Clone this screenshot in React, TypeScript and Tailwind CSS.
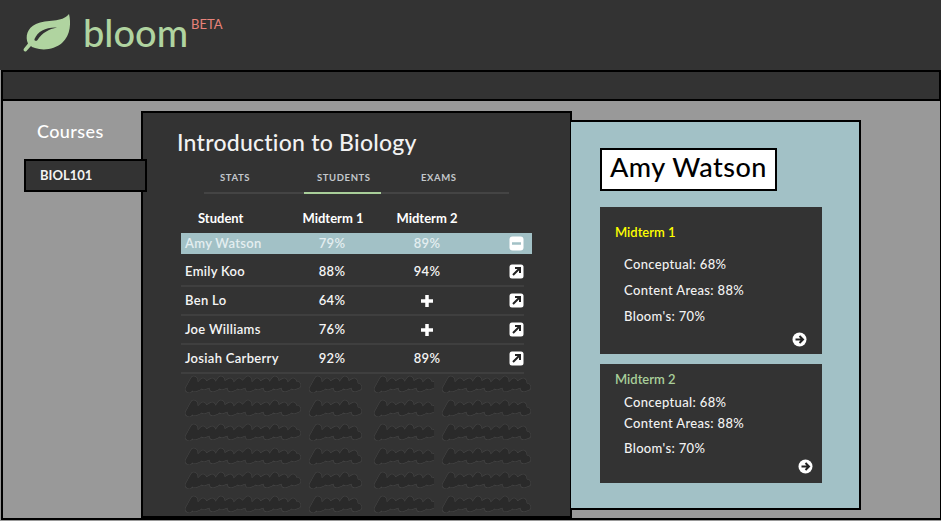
import { useMemo } from 'react';

const students = [
  { name: 'Amy Watson', m1: '79%', m2: '89%', active: true },
  { name: 'Emily Koo', m1: '88%', m2: '94%' },
  { name: 'Ben Lo', m1: '64%', m2: null },
  { name: 'Joe Williams', m1: '76%', m2: null },
  { name: 'Josiah Carberry', m1: '92%', m2: '89%' },
];

function Leaf() {
  return (
    <svg width="50" height="40" viewBox="0 0 50 40" className="shrink-0">
      <path d="M47 1C49 9 49 22 40 30C33 36 22 38 13 35C11 34.500 10 34 9 33L4.500 38C3 39.500 0.500 37.500 2 35.500L6 30.500C3 24 5 15 14 11C25 6 40 10 47 1Z" fill="#b0d4a0" />
      <path d="M12.500 26C16 18 24 14 35 14.500C27 16 20 20 15.500 27C14.500 28.500 12 28 12.500 26Z" fill="#333333" />
    </svg>
  );
}

function ArrowBox() {
  return (
    <svg width="15" height="15" viewBox="0 0 15 15" className="block">
      <rect width="14" height="14" x="0.500" y="0.500" rx="2.500" fill="#fff" />
      <path d="M4 11L10 5M6 4H11V9" fill="none" stroke="#222" strokeWidth="2" />
    </svg>
  );
}

function MinusBox() {
  return (
    <svg width="15" height="15" viewBox="0 0 15 15" className="block">
      <rect width="14" height="14" x="0.500" y="0.500" rx="3" fill="#fff" />
      <path d="M3 7.500H12" stroke="#a2c1c6" strokeWidth="2.500" />
    </svg>
  );
}

function PlusMark() {
  return (
    <svg width="14" height="14" viewBox="0 0 14 14" className="block">
      <path d="M7 1V13M1 7H13" stroke="#fff" strokeWidth="3.500" />
    </svg>
  );
}

function CircleArrow() {
  return (
    <svg width="15" height="15" viewBox="0 0 15 15" className="block">
      <circle cx="7.500" cy="7.500" r="7" fill="#fff" />
      <path d="M3.500 7.500H10.500M7.500 4L11 7.500L7.500 11" fill="none" stroke="#222" strokeWidth="2" />
    </svg>
  );
}

function Scribble({ width }: { width: number }) {
  const d = useMemo(() => {
    let p = 'M4 14';
    let i = 0;
    for (let x = 4; x < width - 10; x += 9) {
      const top = i % 3 === 0 ? 5 : 7;
      const low = i % 2 === 0 ? 13 : 11;
      p += ` L${x + 5} ${top} L${x + 6} ${low} L${x + 9} ${low - 1}`;
      i++;
    }
    return p;
  }, [width]);
  return (
    <svg width={width} height="18" viewBox={`0 0 ${width} 18`} className="block shrink-0">
      <path d={d} fill="none" stroke="#484848" strokeWidth="8" strokeLinecap="round" strokeLinejoin="round" />
      <path d={d} fill="none" stroke="#2a2a2a" strokeWidth="7" strokeLinecap="round" strokeLinejoin="round" />
    </svg>
  );
}

function ScoreCard({ title, titleClass, lines, className, iconClass }: {
  title: string;
  titleClass: string;
  lines: { text: string; className: string }[];
  className: string;
  iconClass: string;
}) {
  return (
    <div className={`w-[222px] bg-[#333333] flex flex-col ${className}`}>
      <div className={`text-[13px] leading-4 font-semibold ${titleClass}`}>{title}</div>
      <div className="pl-[9px]">
        {lines.map(l => (
          <div key={l.text} className={`text-[13px] leading-4 font-medium tracking-[0.35px] text-[#f2f2f2] ${l.className}`}>{l.text}</div>
        ))}
      </div>
      <div className={`flex justify-end ${iconClass}`}>
        <CircleArrow />
      </div>
    </div>
  );
}

export default function App() {
  return (
    <div className="h-[521px] w-[941px] overflow-hidden bg-[#999999] font-['Lato',sans-serif] text-[#f2f2f2]">
      {/* Header */}
      <div className="h-[70px] bg-[#333333] flex items-start pl-[22px] pt-[13px]">
        <Leaf />
        <span className="ml-[11px] mt-[-4px] text-[38px] leading-[46px] font-medium text-[#b0d4a0]">bloom</span>
        <span className="ml-[3px] mt-[3px] text-[13px] leading-4 text-[#e8837a]">BETA</span>
      </div>
      <div className="h-[31px] bg-[#333333] border-2 border-black ml-px" />

      {/* Body */}
      <div className="h-[419px] flex border-l-2 border-b-2 border-r border-black ml-px">
        <div className="w-[138px] shrink-0 pt-[18px] relative z-10">
          <div className="pl-[34px] text-[18px] leading-6 font-medium tracking-[0.4px] text-white">Courses</div>
          <div className="mt-[16px] ml-[21px] w-[123px] h-[33px] bg-[#333333] border-2 border-black pl-[14px] flex items-center text-[13px] font-bold">BIOL101</div>
        </div>

        <div className="w-[431px] shrink-0 mt-[10px] bg-[#333333] border-2 border-black pl-[34px] pt-[13px]">
          <h1 className="text-[23px] leading-8 font-medium tracking-[0.25px]">Introduction to Biology</h1>
          {/* Tabs */}
          <div className="mt-[14px] ml-[27px] w-[305px] h-[22px] border-b-2 border-[#444444] flex text-[9.500px] leading-3 font-bold tracking-[0.6px] text-[#c4c8cc]">
            <div className="w-[100px] h-[22px] pl-[16px]">STATS</div>
            <div className="w-[77px] h-[22px] pl-[13px] border-b-2 border-[#a9cf9a]">STUDENTS</div>
            <div className="pl-[40px]">EXAMS</div>
          </div>
          {/* Table */}
          <div className="ml-[4px] w-[351px] mt-[16px]">
            <div className="grid grid-cols-[105px_84px_106px_1fr] pl-1 text-[13px] leading-4 font-bold text-white h-[23px]">
              <div className="pl-[13px]">Student</div>
              <div className="text-center ml-[2px]">Midterm 1</div>
              <div className="text-center">Midterm 2</div>
            </div>
            {students.map(s => (
              <div key={s.name} className={`grid grid-cols-[105px_84px_106px_1fr] items-center pl-1 text-[13px] font-semibold tracking-[0.3px] ${s.active ? 'h-[21px] bg-[#a2c1c6] pr-2 text-[#e4eef0] mb-[4px]' : 'h-[29px] border-b-2 border-[#3f3f3f] text-[#f5f5f5] mr-2'}`}>
                <div className="whitespace-nowrap">{s.name}</div>
                <div className="text-center">{s.m1}</div>
                <div className="flex justify-center">{s.m2 ?? <PlusMark />}</div>
                <div className="justify-self-end">{s.active ? <MinusBox /> : <ArrowBox />}</div>
              </div>
            ))}
            <div className="mt-[1px] flex flex-col gap-[6px]">
              {[0, 1, 2, 3, 4, 5].map(i => (
                <div key={i} className="flex gap-2 pl-1">
                  <Scribble width={116} />
                  <Scribble width={57} />
                  <Scribble width={60} />
                  <Scribble width={94} />
                </div>
              ))}
            </div>
          </div>
        </div>

        {/* Student detail */}
        <div className="w-[290px] h-[390px] shrink-0 mt-[19px] -ml-px bg-[#a2c1c6] border-2 border-l-0 border-black pl-[29px] pt-[26px]">
          <div className="w-[177px] h-[43px] bg-white border-2 border-black flex items-center pl-[8px] pb-[4px] text-[27px] tracking-[0.5px] text-black font-medium">Amy Watson</div>
          <ScoreCard
            title="Midterm 1"
            titleClass="text-[#ffff00]"
            className="h-[147px] mt-[16px] pl-[15px] pt-[17px] pr-[15px]"
            iconClass="mt-[8px]"
            lines={[
              { text: "Conceptual: 68%", className: 'mt-[16px]' },
              { text: 'Content Areas: 88%', className: 'mt-[10px]' },
              { text: "Bloom's: 70%", className: 'mt-[10px]' },
            ]}
          />
          <ScoreCard
            title="Midterm 2"
            titleClass="text-[#a9cf9a]"
            className="h-[119px] mt-[10px] pl-[15px] pt-[7px] pr-[9px]"
            iconClass="mt-[3px]"
            lines={[
              { text: "Conceptual: 68%", className: 'mt-[7px]' },
              { text: 'Content Areas: 88%', className: 'mt-[5px]' },
              { text: "Bloom's: 70%", className: 'mt-[9px]' },
            ]}
          />
        </div>
      </div>
    </div>
  );
}
